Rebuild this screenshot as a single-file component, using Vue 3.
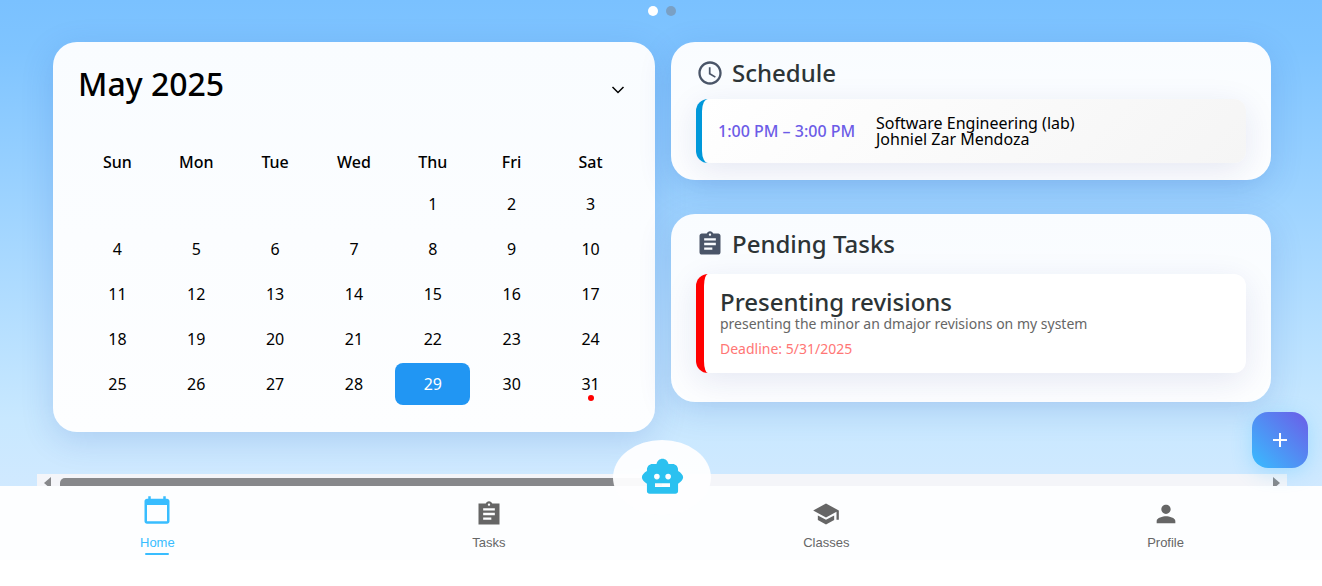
<script setup>
import { ref } from 'vue'

const weekdays = ['Sun', 'Mon', 'Tue', 'Wed', 'Thu', 'Fri', 'Sat']
const firstWeekday = 4
const weeks = Array.from({ length: 5 }, (_, w) =>
  Array.from({ length: 7 }, (_, d) => {
    const n = w * 7 + d - firstWeekday + 1
    return n > 0 && n <= 31 ? n : null
  })
)
const selected = ref(29)
const marked = [31]

const icons = {
  home: 'M20 3h-1V1h-2v2H7V1H5v2H4c-1.1 0-2 .9-2 2v16c0 1.1.9 2 2 2h16c1.1 0 2-.9 2-2V5c0-1.1-.9-2-2-2zm0 18H4V8h16v13z',
  tasks: 'M21 3h-6.18C14.4 1.84 13.3 1 12 1s-2.4.84-2.82 2H3v18h18V3zm-9 0c.55 0 1 .45 1 1s-.45 1-1 1-1-.45-1-1 .45-1 1-1zm2 14H7v-2h7v2zm3-4H7v-2h10v2zm0-4H7V7h10v2z',
  classes: 'M5 13.18v4L12 21l7-3.82v-4L12 17l-7-3.82zM12 3L1 9l11 6 9-4.91V17h2V9L12 3z',
  profile: 'M12 12c2.21 0 4-1.79 4-4s-1.79-4-4-4-4 1.79-4 4 1.79 4 4 4zm0 2c-2.67 0-8 1.34-8 4v2h16v-2c0-2.66-5.33-4-8-4z',
}
const nav = [
  { id: 'home', label: 'Home', active: true },
  { id: 'tasks', label: 'Tasks' },
  { id: 'classes', label: 'Classes' },
  { id: 'profile', label: 'Profile' },
]
</script>

<template>
  <div class="app">
    <main class="main">
      <div class="dots">
        <span class="dot on"></span>
        <span class="dot"></span>
      </div>

      <div class="panels">
        <section class="card calendar">
          <header class="cal-head">
            <h1>May 2025</h1>
            <button class="toggle" aria-label="Expand calendar">
              <svg width="14" height="14" viewBox="0 0 14 14"><path d="M1.500 4l5.500 5.500L12.500 4" fill="none" stroke="#000" stroke-width="1.5" /></svg>
            </button>
          </header>
          <table>
            <thead>
              <tr><th v-for="d in weekdays" :key="d" scope="col">{{ d }}</th></tr>
            </thead>
            <tbody>
              <tr v-for="(week, i) in weeks" :key="i">
                <td v-for="(day, j) in week" :key="j">
                  <button v-if="day" class="day" :class="{ selected: day === selected, marked: marked.includes(day) }" @click="selected = day">{{ day }}</button>
                </td>
              </tr>
            </tbody>
          </table>
        </section>

        <div class="side">
          <section class="card schedule">
            <h2>
              <svg class="title-icon" viewBox="0 0 24 24"><path d="M11.990 2C6.470 2 2 6.480 2 12s4.470 10 9.990 10C17.520 22 22 17.520 22 12S17.520 2 11.990 2zM12 20c-4.420 0-8-3.580-8-8s3.580-8 8-8 8 3.580 8 8-3.580 8-8 8zm.5-13H11v6l5.250 3.150.75-1.230-4.500-2.670z" /></svg>
              Schedule
            </h2>
            <article class="item lesson">
              <span class="time">1:00 PM – 3:00 PM</span>
              <div class="subject">
                <div>Software Engineering (lab)</div>
                <div>Johniel Zar Mendoza</div>
              </div>
            </article>
          </section>

          <section class="card pending">
            <h2>
              <svg class="title-icon" viewBox="0 0 24 24"><path d="M19 3h-4.180C14.400 1.840 13.300 1 12 1s-2.400.84-2.820 2H5c-1.100 0-2 .9-2 2v14c0 1.100.9 2 2 2h14c1.100 0 2-.9 2-2V5c0-1.100-.9-2-2-2zm-7 0c.55 0 1 .45 1 1s-.45 1-1 1-1-.45-1-1 .45-1 1-1zm2 14H7v-2h7v2zm3-4H7v-2h10v2zm0-4H7V7h10v2z" /></svg>
              Pending Tasks
            </h2>
            <article class="item task">
              <h3>Presenting revisions</h3>
              <p class="desc">presenting the minor an dmajor revisions on my system</p>
              <p class="deadline">Deadline: 5/31/2025</p>
            </article>
          </section>
        </div>
      </div>

      <div class="scrollbar">
        <span class="arrow left"></span>
        <span class="track"><span class="thumb"></span></span>
        <span class="arrow right"></span>
      </div>
    </main>

    <nav class="nav">
      <a v-for="n in nav" :key="n.id" :href="'#' + n.id" class="link" :class="{ active: n.active }">
        <span class="icon-box"><svg viewBox="0 0 24 24"><path :d="icons[n.id]" /></svg></span>
        <span class="label">{{ n.label }}</span>
      </a>
      <button class="bot" aria-label="Assistant">
        <svg width="45" height="45" viewBox="0 0 24 24"><path fill="#2bc1f0" fill-rule="evenodd" d="M20.300 8.500V7.800c0-1.700-1.300-3-3-3H15.200C14.900 3.200 13.600 2 12 2S9.100 3.200 8.800 4.800H6.700c-1.700 0-3 1.300-3 3v.7C2.200 9.400 1 10.600 1 11.900s1.200 2.500 2.700 3.400v3.900c0 .9.600 1.500 1.500 1.500h13.600c.9 0 1.500-.6 1.500-1.500v-3.900c1.500-.9 2.700-2.100 2.700-3.400s-1.200-2.500-2.700-3.400zM7.500 11.500a1.500 1.500 0 1 1 3 0a1.500 1.500 0 1 1-3 0zM16 17H8v-2h8v2zM13.500 11.500a1.500 1.500 0 1 1 3 0a1.500 1.500 0 1 1-3 0z" /></svg>
      </button>
      <button class="fab" aria-label="Add">
        <svg width="24" height="24" viewBox="0 0 24 24"><path d="M19 13h-6v6h-2v-6H5v-2h6V5h2v6h6v2z" fill="#fff" /></svg>
      </button>
    </nav>
  </div>
</template>

<style>
body {
  margin: 0;
  background: #fff;
}
</style>

<style scoped>
.app {
  font-family: "Noto Sans", "Open Sans", sans-serif;
  color: #000;
}
button {
  font: inherit;
  border: 0;
  padding: 0;
  background: none;
  color: inherit;
  cursor: pointer;
}
h1, h2, h3, p {
  margin: 0;
}
.main {
  padding: 6px 35px 0 37px;
  background: linear-gradient(180deg, #7ac1ff 0%, #7fc4ff 10%, #c8e8ff 86%, #d0e9ff 100%);
}
.dots {
  display: flex;
  justify-content: center;
  gap: 8px;
  height: 10px;
}
.dot {
  width: 10px;
  height: 10px;
  border-radius: 50%;
  background: #7aa0c4;
}
.dot.on {
  background: #fff;
}
.panels {
  display: grid;
  grid-template-columns: 602fr 600fr;
  align-items: start;
  gap: 16px;
  padding: 26px 16px 42px;
}
.card {
  box-sizing: border-box;
  border-radius: 24px;
  padding: 16px 25px;
  background: linear-gradient(180deg, #f9fcff, #fdfeff);
  box-shadow: 0 8px 32px rgba(31, 78, 175, 0.17);
}
.calendar {
  padding: 20px 25px 26px;
}
.cal-head {
  display: flex;
  justify-content: space-between;
  align-items: center;
  height: 44px;
  margin-bottom: 36px;
}
h1 {
  font-size: 32px;
  line-height: 44px;
  font-weight: 500;
}
.toggle {
  width: 24px;
  height: 32px;
  align-self: flex-end;
  display: grid;
  place-items: center;
}
table {
  width: 100%;
  table-layout: fixed;
  border-collapse: collapse;
}
th {
  height: 39px;
  padding: 0;
  font-size: 16px;
  font-weight: 500;
}
td {
  height: 45px;
  padding: 0 2px;
}
.day {
  display: block;
  position: relative;
  width: 100%;
  height: 42px;
  border-radius: 8px;
  font-size: 16px;
  line-height: 42px;
  text-align: center;
}
.day.selected {
  background: #2196f3;
  color: #fff;
}
.day.marked::after {
  content: "";
  position: absolute;
  left: 50%;
  bottom: 4px;
  width: 6px;
  height: 6px;
  margin-left: -3px;
  border-radius: 50%;
  background: #f00;
}
.side {
  display: grid;
  gap: 34px;
}
h2 {
  display: flex;
  align-items: center;
  gap: 8px;
  height: 28px;
  font-size: 24px;
  line-height: 28px;
  font-weight: 500;
  color: #2d3436;
}
.title-icon {
  width: 28px;
  height: 28px;
  fill: #4a5568;
}
.schedule {
  padding-top: 17px;
  padding-bottom: 17px;
}
.schedule h2 {
  margin-bottom: 12px;
}
.pending {
  padding-bottom: 29px;
}
.pending h2 {
  margin-bottom: 16px;
}
.item {
  box-sizing: border-box;
  border-radius: 12px;
  box-shadow: 0 8px 32px rgba(31, 38, 135, 0.1);
}
.lesson {
  display: flex;
  align-items: center;
  gap: 16px;
  height: 64px;
  padding: 0 16px;
  border-left: 6px solid #0098da;
  background: linear-gradient(135deg, #fff, #f5f5f5);
}
.time {
  min-width: 142px;
  font-size: 16px;
  font-weight: 500;
  color: #6c5ce7;
}
.subject {
  font-size: 16px;
  line-height: 16px;
}
.task {
  padding: 16px;
  border-left: 8px solid #f00;
  background: #fff;
}
h3 {
  font-size: 24px;
  line-height: 24px;
  font-weight: 500;
  color: #2d3436;
}
.desc {
  font-size: 14px;
  line-height: 20px;
  color: #666;
}
.deadline {
  margin-top: 7px;
  font-size: 14px;
  line-height: 16px;
  color: #ff7675;
}
.scrollbar {
  display: flex;
  height: 12px;
  overflow: hidden;
  background: #f4f5f9;
}
.arrow {
  width: 7px;
  height: 12px;
  margin: 3px 9px 0 7px;
  background: #87888b;
  clip-path: polygon(100% 0, 0 6px, 100% 12px);
}
.arrow.right {
  margin: 3px 7px 0 9px;
  clip-path: polygon(0 0, 100% 6px, 0 12px);
}
.track {
  flex: 1;
  padding-top: 4px;
}
.thumb {
  display: block;
  width: 50%;
  height: 16px;
  border-radius: 5px;
  background: #87888b;
}
.nav {
  position: relative;
  display: flex;
  justify-content: space-between;
  box-sizing: border-box;
  height: 74px;
  padding: 9px 138px 0 140px;
  background: #fdfeff;
  font-family: "Liberation Sans", Arial, sans-serif;
}
.link {
  display: flex;
  flex-direction: column;
  align-items: center;
  color: #666;
  text-decoration: none;
}
.icon-box {
  display: flex;
  align-items: center;
  height: 38px;
}
.icon-box svg {
  width: 28px;
  height: 28px;
  fill: currentColor;
}
.label {
  font-size: 13px;
  line-height: 20px;
}
.link.active {
  color: #38bdff;
}
.link.active .icon-box {
  align-items: flex-start;
}
.link.active svg {
  width: 30px;
  height: 30px;
}
.link.active::after {
  content: "";
  width: 24px;
  height: 2px;
  border-radius: 1px;
  background: currentColor;
}
.bot {
  position: absolute;
  left: 50%;
  top: -46px;
  width: 98px;
  height: 75px;
  margin-left: -48px;
  display: grid;
  place-items: center;
  border-radius: 50%;
  background: rgba(254, 254, 255, 0.96);
}
.fab {
  position: absolute;
  right: 14px;
  top: -74px;
  width: 56px;
  height: 56px;
  display: grid;
  place-items: center;
  border-radius: 16px;
  background: linear-gradient(45deg, #38bdff, #6c5ce7);
  box-shadow: 0 4px 20px rgba(56, 189, 255, 0.3);
}
</style>
